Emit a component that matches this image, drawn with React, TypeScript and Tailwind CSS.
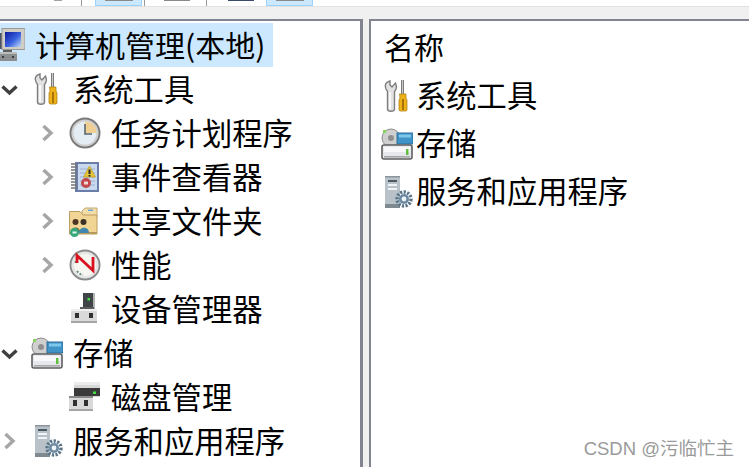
import type React from "react";

function ChevronDown() {
  return (
    <svg width="20" height="12" viewBox="0 0 20 12" className="block">
      <path d="M2.5 2.5 L9.5 9 L16.5 2.5" fill="none" stroke="#404040" strokeWidth="3.4" />
    </svg>
  );
}

function ChevronRight() {
  return (
    <svg width="14" height="18" viewBox="0 0 14 18" className="block">
      <path d="M2.5 2 L10 9 L2.5 16" fill="none" stroke="#a6a6a6" strokeWidth="3.4" />
    </svg>
  );
}

function ComputerIcon() {
  return (
    <svg width="32" height="34" viewBox="0 0 32 34" className="block">
      <defs>
        <linearGradient id="screen" x1="0" y1="0" x2="1" y2="1">
          <stop offset="0" stopColor="#0a1a9c" />
          <stop offset="0.55" stopColor="#3a62e0" />
          <stop offset="1" stopColor="#c4dcf6" />
        </linearGradient>
      </defs>
      <rect x="7" y="5" width="4" height="16" fill="#4a5160" />
      <rect x="9" y="0.5" width="23" height="21" fill="#cfcdc5" stroke="#9a9a94" />
      <rect x="12" y="4" width="16" height="15" fill="url(#screen)" />
      <rect x="10" y="22" width="9" height="2" fill="#5e5e5e" />
      <rect x="7" y="24" width="17" height="9" fill="#8b8f90" />
      <rect x="7" y="24" width="17" height="2" fill="#bcbebe" />
      <rect x="9" y="28" width="2" height="2" fill="#3d3d3d" />
      <rect x="19" y="28" width="2" height="2" fill="#3d3d3d" />
    </svg>
  );
}

function ToolsIcon() {
  return (
    <svg width="32" height="32" viewBox="0 0 32 32" className="block">
      <path d="M5 9 C3 5 5 2 9 1 L9 5 L11 7 L14.5 3 C16 7 15 10 13.5 11.5 L13.5 29 C13.5 32 6.5 32 6.5 29 L6.5 11.5 Z" fill="#e2e2e2" stroke="#7e7e7e" strokeWidth="1.4" />
      <path d="M9 12 V29" stroke="#ffffff" strokeWidth="1.6" />
      <rect x="20" y="0" width="3" height="14" fill="#7d7d7d" />
      <rect x="21" y="0" width="1" height="14" fill="#c8c8c8" />
      <path d="M18.5 14 H25 V18 L26 20 V30 L25 31 H19 L18 30 V20 L19 18 Z" fill="#eeb31a" stroke="#a87a0c" strokeWidth="0.7" />
      <rect x="21" y="19" width="2" height="11" fill="#a87408" />
    </svg>
  );
}

function ClockIcon() {
  return (
    <svg width="32" height="32" viewBox="0 0 32 32" className="block">
      <circle cx="16" cy="16" r="15.5" fill="#7a7a7a" />
      <circle cx="16" cy="16" r="13.6" fill="#cfcfcf" />
      <circle cx="16" cy="16" r="11.5" fill="#e4ecf4" />
      <path d="M16 4.5 A11.5 11.5 0 0 1 27.5 16 H16 Z" fill="#f0cf92" />
      <path d="M16 7 V17 H23" fill="none" stroke="#5a6670" strokeWidth="1.6" />
    </svg>
  );
}

function EventIcon() {
  return (
    <svg width="32" height="32" viewBox="0 0 32 32" className="block">
      <rect x="6" y="1" width="24" height="30" fill="#6a7ca8" />
      <rect x="9" y="3" width="19" height="26" fill="#c8d8ee" />
      <path d="M11 8 H26 M11 12 H26 M11 16 H26 M11 20 H26 M11 24 H26" stroke="#9fb2cf" strokeWidth="1" />
      <path d="M2 3 H8 M2 6 H8 M2 9 H8 M2 12 H8 M2 15 H8 M2 18 H8 M2 21 H8 M2 24 H8 M2 27 H8" stroke="#767676" strokeWidth="1.6" />
      <path d="M20.5 5 L26.5 16 H14.5 Z" fill="#e6c43a" stroke="#c0a22a" strokeWidth="0.8" />
      <rect x="19.5" y="8.5" width="2" height="4.5" fill="#2a2a2a" />
      <rect x="19.5" y="14" width="2" height="1.5" fill="#2a2a2a" />
      <circle cx="17" cy="22" r="5" fill="#c2474c" />
      <rect x="15" y="20.5" width="4" height="3" fill="#f0d8d8" />
    </svg>
  );
}

function FolderIcon() {
  return (
    <svg width="32" height="32" viewBox="0 0 32 32" className="block">
      <path d="M13 6 L16 3 H28 V12 H13 Z" fill="#f2dca8" stroke="#c4a86c" />
      <rect x="19" y="4.5" width="5" height="1.5" fill="#62a8e0" />
      <path d="M0.5 6.5 H11 L14 10 H28 V29 H0.5 Z" fill="#f0d595" stroke="#bb9d60" />
      <rect x="1" y="27" width="27" height="2" fill="#b89a5a" />
      <circle cx="6.5" cy="17" r="3" fill="#4e3524" />
      <path d="M2 27 C2 21 11 21 11 27 Z" fill="#6a5a4a" />
      <circle cx="14.5" cy="17" r="3" fill="#3d3026" />
      <path d="M10 28 C10 21 20 21 20 28 Z" fill="#3f87b0" />
      <circle cx="5.5" cy="27.5" r="4.5" fill="#35a87c" />
      <rect x="3.5" y="26.5" width="4" height="2" fill="#e4f5ee" />
    </svg>
  );
}

function PerfIcon() {
  return (
    <svg width="32" height="32" viewBox="0 0 32 32" className="block">
      <circle cx="16" cy="16" r="15.5" fill="#8a8a8a" />
      <circle cx="16" cy="16" r="13.6" fill="#e6e6e6" />
      <circle cx="16" cy="16" r="11" fill="#f8f6f0" />
      <path d="M6.5 14 A10 10 0 0 1 10 8" fill="none" stroke="#5e8a72" strokeWidth="2" strokeDasharray="2 1.5" />
      <path d="M8 22 A10 10 0 0 0 14 26" fill="none" stroke="#5e8a72" strokeWidth="2" strokeDasharray="2 1.5" />
      <path d="M8 14 V6.5 L24 21.5 V8" fill="none" stroke="#d8121e" strokeWidth="2.8" />
    </svg>
  );
}

function DeviceIcon() {
  return (
    <svg width="32" height="32" viewBox="0 0 32 32" className="block">
      <rect x="14" y="0" width="12" height="16" fill="#3f4448" />
      <rect x="24" y="0" width="2" height="16" fill="#b4b4b4" />
      <rect x="18.5" y="5" width="2.5" height="2.5" fill="#3fe03f" />
      <rect x="11" y="14" width="14" height="2" fill="#5c5c5c" />
      <rect x="2" y="16" width="26" height="14" fill="#d9d9d9" />
      <rect x="2" y="16" width="26" height="2" fill="#efefef" />
      <rect x="2" y="28" width="26" height="2" fill="#a5a5a5" />
      <rect x="6" y="20" width="4" height="5" fill="#303030" />
      <rect x="20" y="20" width="4" height="5" fill="#303030" />
    </svg>
  );
}

function StorageIcon() {
  return (
    <svg width="32" height="32" viewBox="0 0 32 32" className="block">
      <circle cx="10" cy="10" r="9" fill="#cfcfcf" stroke="#8c8c8c" />
      <circle cx="10" cy="10" r="3" fill="#8f8f8f" />
      <rect x="2" y="2" width="3" height="3" fill="#86d65a" />
      <rect x="16" y="5" width="16" height="11" fill="#3f93c6" stroke="#2c6f9c" />
      <rect x="18" y="6.5" width="12" height="3" fill="#7cc7ea" />
      <rect x="1" y="17" width="30" height="14" rx="2" fill="#e6e8ee" stroke="#5f5f5f" strokeWidth="1.6" />
      <rect x="3" y="19" width="26" height="5" fill="#f8f8fb" />
      <rect x="25" y="21" width="2.5" height="6" fill="#5fbf3f" />
      <rect x="3" y="28" width="26" height="1.6" fill="#a8a8a8" />
    </svg>
  );
}

function DiskIcon() {
  return (
    <svg width="32" height="32" viewBox="0 0 32 32" className="block">
      <rect x="5" y="1" width="26" height="15" fill="#d8d8d8" />
      <rect x="5" y="1" width="26" height="3" fill="#ececec" />
      <rect x="5" y="7" width="26" height="8" fill="#3a3a3a" />
      <rect x="24" y="10.5" width="3" height="2.5" fill="#3fe03f" />
      <rect x="0" y="17" width="24" height="13" fill="#d9d9d9" />
      <rect x="0" y="15" width="24" height="2" fill="#8a8a8a" />
      <rect x="0" y="28" width="24" height="2" fill="#a5a5a5" />
      <rect x="4" y="19" width="4" height="6" fill="#303030" />
      <rect x="15" y="19" width="4" height="6" fill="#303030" />
    </svg>
  );
}

function ServicesIcon() {
  return (
    <svg width="32" height="32" viewBox="0 0 32 32" className="block">
      <rect x="4" y="0" width="15" height="32" fill="#b8c2c8" />
      <rect x="4" y="0" width="15" height="1.5" fill="#8a949a" />
      <rect x="7" y="4" width="9" height="2" fill="#4c5a62" />
      <rect x="7" y="8" width="9" height="2" fill="#f2f5f7" />
      <rect x="7" y="12" width="9" height="2" fill="#f2f5f7" />
      <rect x="4" y="28" width="15" height="4" fill="#7e8a90" />
      <circle cx="23" cy="23" r="7" fill="none" stroke="#5a7488" strokeWidth="3.4" strokeDasharray="2.2 1.4" />
      <circle cx="23" cy="23" r="5" fill="#6d8aa2" />
      <circle cx="23" cy="23" r="2.4" fill="#eef3f7" />
    </svg>
  );
}

function TreeRow({
  level,
  arrow,
  icon,
  label,
}: {
  level: 1 | 2;
  arrow?: "open" | "closed";
  icon: React.ReactNode;
  label: string;
}) {
  return (
    <div className={level === 1 ? "flex h-[44px] items-center" : "flex h-[44px] items-center pl-[38px]"}>
      <div className={level === 1 && arrow === "open" ? "w-[31px] pt-[2px]" : "w-[31px] pl-[3px]"}>
        {arrow === "open" && <ChevronDown />}
        {arrow === "closed" && <ChevronRight />}
      </div>
      {icon}
      <span className="ml-[10px] whitespace-nowrap pb-[2px] text-[30.3px]">{label}</span>
    </div>
  );
}

function ListRow({ icon, label }: { icon: React.ReactNode; label: string }) {
  return (
    <div className="flex h-[48px] items-center">
      {icon}
      <span className="ml-[3px] whitespace-nowrap pb-[4px] text-[30.3px]">{label}</span>
    </div>
  );
}

export default function App() {
  return (
    <div className="relative h-[467px] w-[749px] overflow-hidden bg-[#f0f0f0] text-[30px] leading-[40px] text-black [font-family:'Noto_Sans_CJK_SC','Noto_Sans',sans-serif]">
      <div className="flex h-[6px] bg-white">
        <div className="w-[54px]" />
        <div className="h-[1px] w-[8px] bg-[#a0a0a0]" />
        <div className="ml-[19px] h-full w-[1px] bg-[#9a9a9a]" />
        <div className="ml-[13px] flex h-full w-[47px] justify-center border-x border-b border-[#99d1ff] bg-[#cce8ff]">
          <div className="h-[1px] w-[28px] bg-[#8a8a8a]" />
        </div>
        <div className="ml-[2px] h-full w-[1px] bg-[#9a9a9a]" />
        <div className="ml-[19px] h-[1px] w-[26px] bg-[#8a8a8a]" />
        <div className="ml-[16px] h-full w-[1px] bg-[#9a9a9a]" />
        <div className="ml-[21px] h-[1px] w-[26px] bg-[#3c4a6e]" />
        <div className="ml-[12px] flex h-full w-[47px] justify-center border-x border-b border-[#99d1ff] bg-[#cce8ff]">
          <div className="h-[1px] w-[28px] bg-[#8a8a8a]" />
        </div>
        <div className="flex-1" />
      </div>
      <div className="h-[1px] bg-[#e2e2e2]" />
      <div className="flex h-[460px] pt-[12px]">
        <div className="w-[363px] overflow-hidden border-t-2 border-r-[3px] border-[#82858f] bg-white pt-[2px]">
          <div className="flex h-[44px] w-[273px] items-center bg-[#cce8ff]">
            <div className="-ml-[7px]">
              <ComputerIcon />
            </div>
            <span className="ml-[10px] whitespace-nowrap pb-[2px]">计算机管理(本地)</span>
          </div>
          <TreeRow level={1} arrow="open" icon={<ToolsIcon />} label="系统工具" />
          <TreeRow level={2} arrow="closed" icon={<ClockIcon />} label="任务计划程序" />
          <TreeRow level={2} arrow="closed" icon={<EventIcon />} label="事件查看器" />
          <TreeRow level={2} arrow="closed" icon={<FolderIcon />} label="共享文件夹" />
          <TreeRow level={2} arrow="closed" icon={<PerfIcon />} label="性能" />
          <TreeRow level={2} icon={<DeviceIcon />} label="设备管理器" />
          <TreeRow level={1} arrow="open" icon={<StorageIcon />} label="存储" />
          <TreeRow level={2} icon={<DiskIcon />} label="磁盘管理" />
          <TreeRow level={1} arrow="closed" icon={<ServicesIcon />} label="服务和应用程序" />
        </div>
        <div className="ml-[6px] flex-1 border-t-2 border-l-2 border-[#82858f] bg-white pl-[10px] pt-[5px]">
          <div className="h-[46px] pl-[3px] leading-[40px]">名称</div>
          <ListRow icon={<ToolsIcon />} label="系统工具" />
          <ListRow icon={<StorageIcon />} label="存储" />
          <ListRow icon={<ServicesIcon />} label="服务和应用程序" />
        </div>
      </div>
      <div className="absolute bottom-[8px] right-[15px] text-[18.5px] leading-[20px] text-[#9a9a9a] [font-family:'Liberation_Sans','Noto_Sans_CJK_SC',sans-serif]">CSDN @污临忙主</div>
    </div>
  );
}
